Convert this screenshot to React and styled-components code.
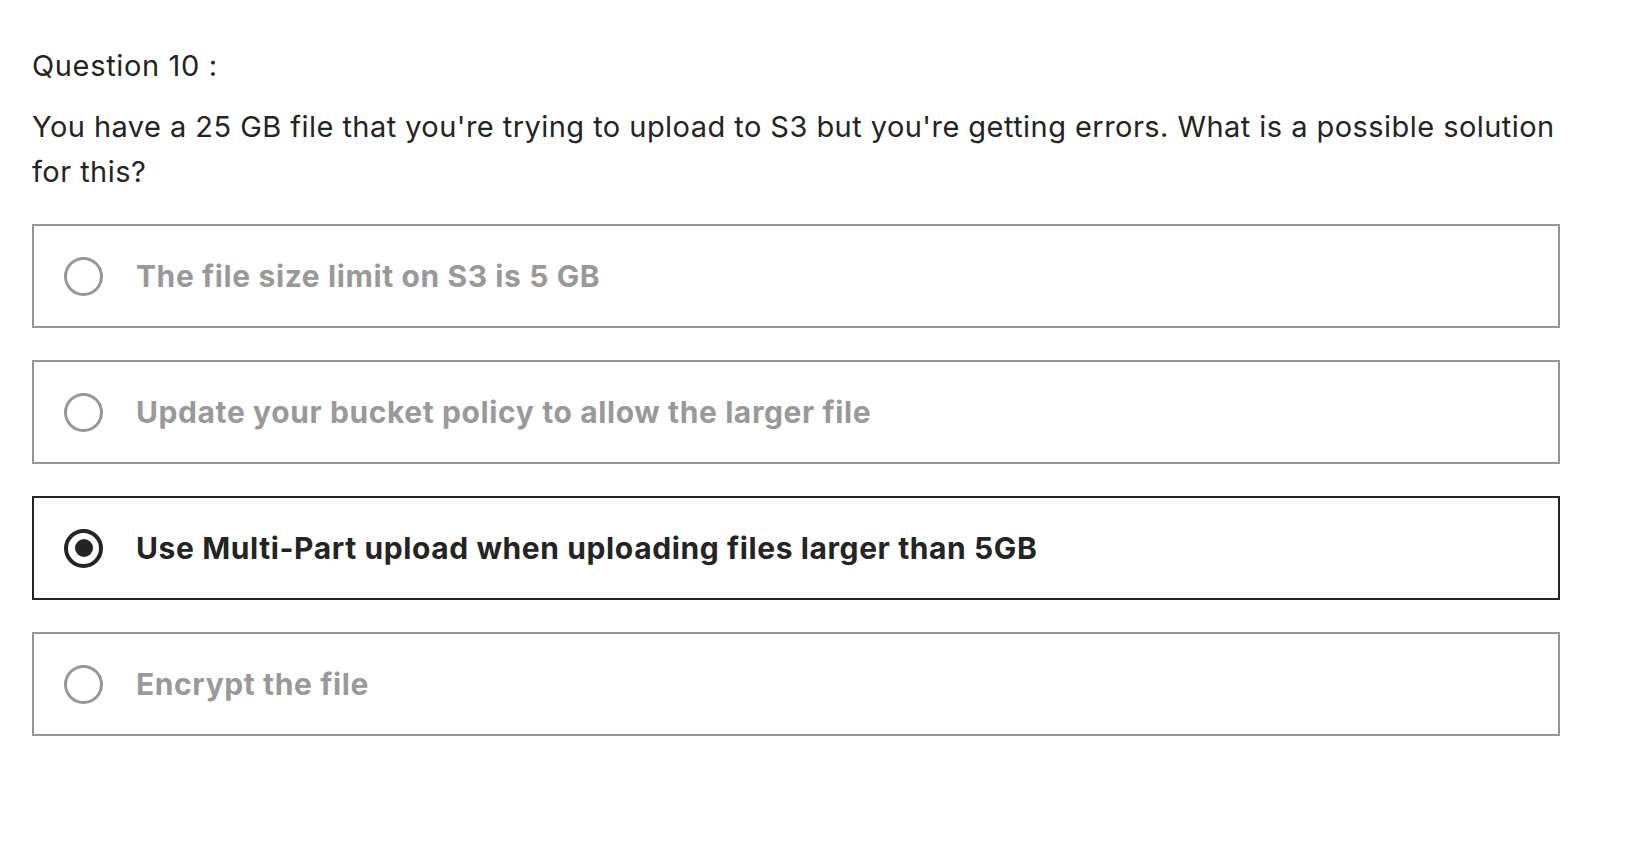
import React, { useState } from "react";
import styled, { createGlobalStyle } from "styled-components";

const GlobalStyle = createGlobalStyle`
  body {
    margin: 0;
    background-color: #fff;
    font-family: Inter, "Liberation Sans", Arial, sans-serif;
    color: #242424;
  }
`;

const Page = styled.div`
  padding: 46px 84px 0 32px;
`;

const Heading = styled.div`
  font-size: 29px;
  line-height: 40px;
  letter-spacing: 0.65px;
  margin-bottom: 18px;
`;

const Prompt = styled.p`
  margin: 0 0 30px;
  font-size: 29px;
  line-height: 45px;
  letter-spacing: 0.45px;
`;

const Options = styled.div`
  display: flex;
  flex-direction: column;
  gap: 32px;
`;

const Option = styled.label`
  display: flex;
  align-items: center;
  gap: 33px;
  height: 104px;
  box-sizing: border-box;
  padding: 0 30px;
  border: 2px solid ${(p) => (p.$active ? "#242424" : "#959595")};
  cursor: pointer;
`;

const Radio = styled.span`
  position: relative;
  flex: none;
  width: 39px;
  height: 39px;
  box-sizing: border-box;
  border-radius: 50%;
  border: ${(p) => (p.$active ? "4px solid #242424" : "3px solid #979797")};

  &::after {
    content: "";
    display: ${(p) => (p.$active ? "block" : "none")};
    position: absolute;
    top: 50%;
    left: 50%;
    width: 18px;
    height: 18px;
    margin: -9px 0 0 -9px;
    border-radius: 50%;
    background-color: #242424;
  }
`;

const OptionText = styled.span`
  font-size: 30px;
  font-weight: 700;
  letter-spacing: 0.6px;
  color: ${(p) => (p.$active ? "#242424" : "#999999")};
`;

const answers = [
  "The file size limit on S3 is 5 GB",
  "Update your bucket policy to allow the larger file",
  "Use Multi-Part upload when uploading files larger than 5GB",
  "Encrypt the file",
];

const App = () => {
  const [picked, setPicked] = useState(2);

  return (
    <Page>
      <GlobalStyle />
      <Heading>Question 10 :</Heading>
      <Prompt>
        You have a 25 GB file that you're trying to upload to S3 but you're getting errors. What is a
        possible solution for this?
      </Prompt>
      <Options>
        {answers.map((text, i) => (
          <Option key={text} $active={picked === i} onClick={() => setPicked(i)}>
            <Radio $active={picked === i} />
            <OptionText $active={picked === i}>{text}</OptionText>
          </Option>
        ))}
      </Options>
    </Page>
  );
};

export default App;
